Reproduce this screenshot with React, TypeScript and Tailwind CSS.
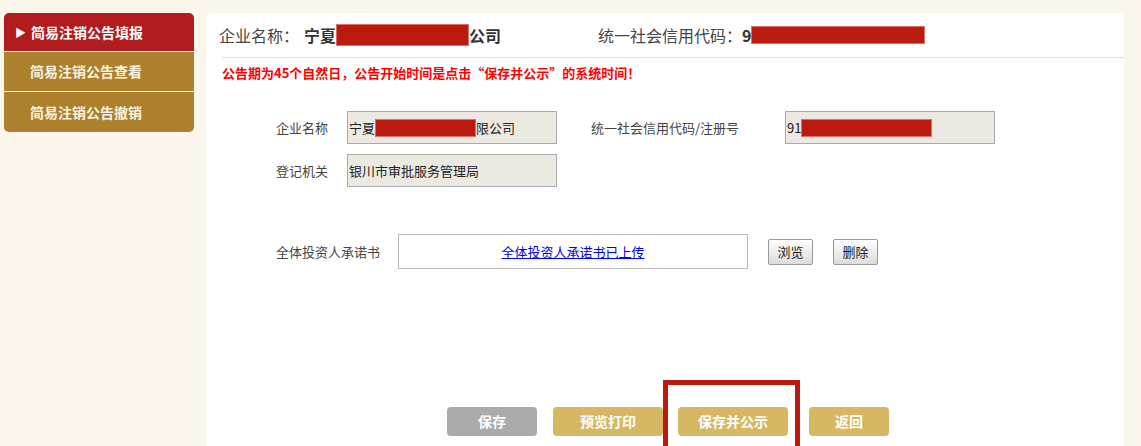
import React from "react";

const font = { fontFamily: '"Microsoft YaHei", "Noto Sans CJK SC", "Noto Sans", sans-serif' };

function Redact({ w, h }: { w: number; h: number }) {
  return (
    <span
      className="inline-block bg-[#bb1a0e] border border-[#d9706a] align-middle"
      style={{ width: w, height: h }}
    />
  );
}

export default function App() {
  return (
    <div
      className="relative w-[1141px] h-[446px] bg-[#faf6ec] overflow-hidden flex items-start pt-[13px] pl-[4px] gap-[12px] text-[#333]"
      style={font}
    >
      {/* Sidebar */}
      <div className="w-[190px] flex flex-col rounded-[5px] overflow-hidden">
        <div className="h-[39px] bg-[#b11c1f] flex items-center pl-[11px] text-white text-[14px] font-semibold border-b border-white">
          <span className="text-[11px] mr-[5px]">▶</span>
          简易注销公告填报
        </div>
        <div className="h-[40px] bg-[#ad802d] flex items-center pl-[26px] text-[#fbf3df] text-[14px] font-semibold border-b border-white">
          简易注销公告查看
        </div>
        <div className="h-[40px] bg-[#ad802d] flex items-center pl-[26px] text-[#fbf3df] text-[14px] font-semibold">
          简易注销公告撤销
        </div>
      </div>

      {/* Main */}
      <div className="w-[918px] h-[440px] bg-white rounded-t-[6px] flex flex-col">
        <div className="h-[44px] flex items-center pl-[13px] text-[16px]">
          <div className="w-[379px] flex items-center">
            <span className="text-[#444]">企业名称：</span>
            <span className="ml-[5px] font-bold">宁夏</span>
            <Redact w={133} h={22} />
            <span className="font-bold">公司</span>
          </div>
          <div className="flex items-center">
            <span className="text-[#444]">统一社会信用代码：</span>
            <span className="font-bold">9</span>
            <Redact w={174} h={18} />
          </div>
        </div>
        <div className="ml-[16px] h-px bg-[#e3e3e3]" />
        <div className="pl-[16px] pt-[6px] text-[13px] font-bold text-[#f00] leading-[18px]">
          公告期为45个自然日，公告开始时间是点击“保存并公示”的系统时间！
        </div>

        {/* form */}
        <div className="mt-[29px] pl-[70px] flex flex-col gap-[10px] text-[13px]">
          <div className="flex items-center h-[33px]">
            <span className="w-[71px] text-[#444]">企业名称</span>
            <div className="w-[210px] h-[33px] bg-[#ebe9e2] border border-[#aaa] flex items-center pl-[1px] text-[#222]">
              宁夏
              <Redact w={101} h={18} />
              限公司
            </div>
            <span className="ml-[34px] w-[194px] text-[#444]">统一社会信用代码/注册号</span>
            <div className="w-[210px] h-[33px] bg-[#ebe9e2] border border-[#aaa] flex items-center pl-[1px] text-[#222]">
              91<Redact w={131} h={18} />
            </div>
          </div>
          <div className="flex items-center h-[33px]">
            <span className="w-[71px] text-[#444]">登记机关</span>
            <div className="w-[210px] h-[33px] bg-[#ebe9e2] border border-[#aaa] flex items-center pl-[1px] text-[#222]">
              银川市审批服务管理局
            </div>
          </div>
          <div className="flex items-center mt-[37px]">
            <span className="w-[122px] text-[#444]">全体投资人承诺书</span>
            <div className="w-[350px] h-[35px] border border-[#bbb] flex items-center justify-center">
              <a className="text-[#00e] underline cursor-pointer">全体投资人承诺书已上传</a>
            </div>
            <button className="ml-[20px] w-[45px] h-[26px] border border-[#999] rounded-[2px] bg-gradient-to-b from-white to-[#dcdcdc] text-[13px] text-[#222]">
              浏览
            </button>
            <button className="ml-[20px] w-[45px] h-[26px] border border-[#999] rounded-[2px] bg-gradient-to-b from-white to-[#dcdcdc] text-[13px] text-[#222]">
              删除
            </button>
          </div>
        </div>

        {/* bottom buttons */}
        <div className="mt-[138px] pl-[241px] flex items-center text-[14px] text-white font-bold">
          <button className="w-[90px] h-[29px] rounded-[4px] bg-[#ababab]">保存</button>
          <button className="ml-[16px] w-[110px] h-[29px] rounded-[4px] bg-[#d6b863]">预览打印</button>
          <button className="ml-[15px] w-[110px] h-[29px] rounded-[4px] bg-[#d6b863]">保存并公示</button>
          <button className="ml-[21px] w-[80px] h-[29px] rounded-[4px] bg-[#d6b863]">返回</button>
        </div>
      </div>

      {/* annotation highlight */}
      <div className="absolute left-[663px] top-[380px] w-[137px] h-[72px] border-[5px] border-[#bb190e]" />
    </div>
  );
}
